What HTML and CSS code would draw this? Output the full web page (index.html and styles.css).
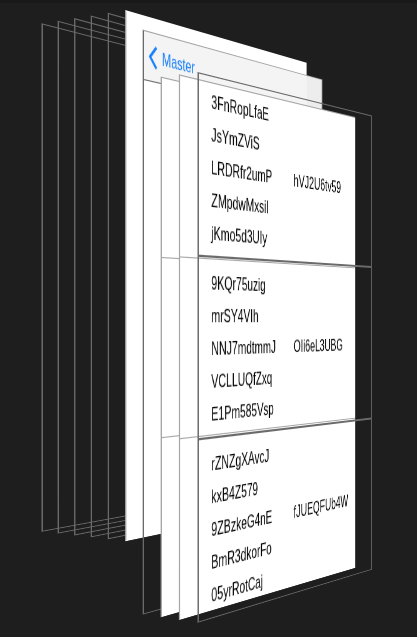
FILE: index.html
```html
<!DOCTYPE html>
<html lang="en">
<head>
<meta charset="utf-8">
<meta name="viewport" content="width=device-width, initial-scale=1">
<title>View hierarchy</title>
<link rel="stylesheet" href="styles.css">
</head>
<body>
<main class="stage">
  <div class="scene">
    <div class="layer depth-0"></div>
    <div class="layer depth-1"></div>
    <div class="layer depth-2"></div>
    <div class="layer depth-3"></div>
    <div class="layer depth-4"></div>
    <div class="layer layer-filled depth-5"></div>
    <div class="layer layer-nav depth-6">
      <nav class="navbar">
        <button class="back" type="button">
          <svg class="chevron" viewBox="0 0 13 21" aria-hidden="true"><path d="M11.5 1 2 10.500 11.500 20"/></svg>
          <span>Master</span>
        </button>
      </nav>
    </div>
    <div class="layer layer-content layer-filled depth-7">
      <div class="cell"></div>
      <div class="cell"></div>
      <div class="cell"></div>
    </div>
    <div class="layer layer-content layer-filled depth-8">
      <div class="cell"></div>
      <div class="cell"></div>
      <div class="cell"></div>
    </div>
    <div class="layer layer-content depth-9">
      <section class="cell cell-front">
        <ul class="labels">
          <li>3FnRopLfaE</li>
          <li>JsYmZViS</li>
          <li>LRDRfr2umP</li>
          <li>ZMpdwMxsiI</li>
          <li>jKmo5d3UIy</li>
        </ul>
        <p class="detail">hVJ2U6tv59</p>
      </section>
      <section class="cell cell-front">
        <ul class="labels">
          <li>9KQr75uzig</li>
          <li>mrSY4VIh</li>
          <li>NNJ7mdtmmJ</li>
          <li>VCLLUQfZxq</li>
          <li>E1Pm585Vsp</li>
        </ul>
        <p class="detail">OIi6eL3UBG</p>
      </section>
      <section class="cell cell-front">
        <ul class="labels">
          <li>rZNZgXAvcJ</li>
          <li>kxB4Z579</li>
          <li>9ZBzkeG4nE</li>
          <li>BmR3dkorFo</li>
          <li>05yrRotCaj</li>
        </ul>
        <p class="detail">fJUEQFUb4W</p>
      </section>
    </div>
  </div>
</main>
</body>
</html>
```
FILE: styles.css
```css
:root {
  --line: #6a6a6a;
  --faint: #a6a6a6;
  --gap: 20px;
}

* {
  box-sizing: border-box;
}

body {
  margin: 0;
  background: #1e1e1e;
  color: #000;
  font: 17px/29px "Liberation Sans", Arial, sans-serif;
}

.stage {
  display: grid;
  place-items: center;
  min-height: 100vh;
  overflow: hidden;
  border-top: 3px solid #191919;
  perspective: 1420px;
  perspective-origin: 50% 320px;
}

/* The exploded device: one rotation, layers spread along its depth. */
.scene {
  display: grid;
  grid-template-columns: 320px;
  align-items: start;
  transform-style: preserve-3d;
  transform: translate(7px, -8px) rotateY(55.3deg);
}

.layer {
  grid-area: 1 / 1;
  height: 480px;
  border: solid var(--line);
  border-width: 1px 2px;
  transform: translateZ(calc((var(--depth) - 4.5) * var(--gap)));
}

.layer-filled {
  background: #fff;
  border-color: #fff #fff #fff var(--faint);
}

.layer-nav {
  height: 524px;
  margin-top: 20px;
  border-top-color: var(--faint);
}

.layer-content {
  height: auto;
  margin-top: 64px;
  border-width: 0;
}

.depth-0 { --depth: 0; }
.depth-1 { --depth: 1; }
.depth-2 { --depth: 2; }
.depth-3 { --depth: 3; }
.depth-4 { --depth: 4; }
.depth-5 { --depth: 5; }
.depth-6 { --depth: 6; }
.depth-7 { --depth: 7; }
.depth-8 { --depth: 8; }
.depth-9 { --depth: 9; }

.navbar {
  display: flex;
  align-items: center;
  height: 44px;
  padding-left: 7px;
  background: rgba(244, 244, 244, 0.97);
  border-bottom: 1px solid var(--line);
}

.back {
  display: flex;
  align-items: center;
  gap: 7px;
  padding: 0;
  border: 0;
  background: none;
  color: #147efb;
  font: inherit;
}

.chevron {
  width: 13px;
  height: 21px;
  fill: none;
  stroke: currentColor;
  stroke-width: 3;
}

.cell {
  height: 160px;
  border: solid var(--faint);
  border-width: 1px 0 0 2px;
}

.cell-front {
  display: grid;
  grid-template-columns: 1fr 1fr;
  align-items: center;
  padding-top: 2px;
  border-color: var(--line);
  border-width: 1px 2px;
}

.labels {
  margin: 0;
  padding: 0 0 0 19px;
  list-style: none;
}

.detail {
  margin: 0;
  padding-left: 1px;
}
```
